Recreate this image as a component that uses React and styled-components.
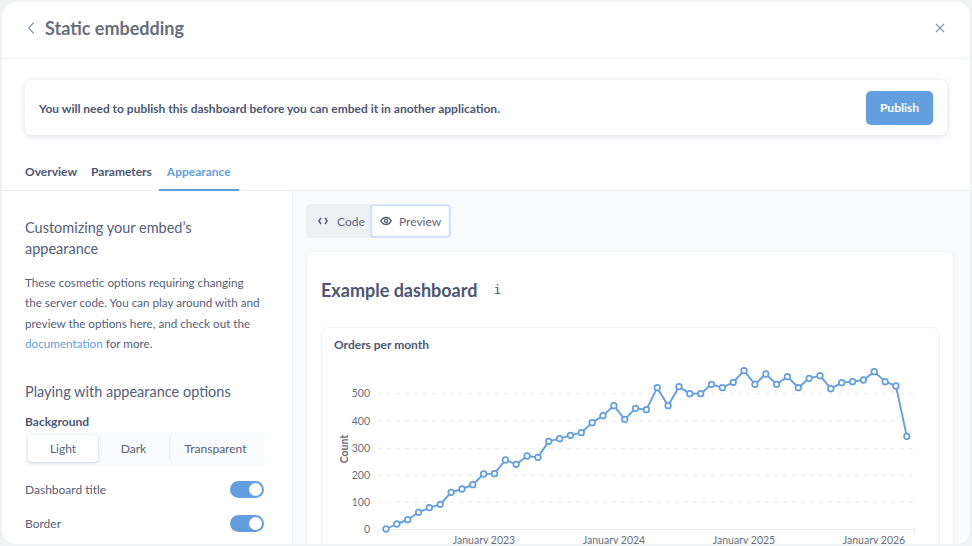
import React from "react";
import styled, { createGlobalStyle } from "styled-components";

const Global = createGlobalStyle`
  html, body { margin: 0; padding: 0; background: #f0f1f2; }
  body { font-family: Lato, "Open Sans", sans-serif; color: #4c5773; overflow: hidden; }
  * { box-sizing: border-box; }
`;

const Frame = styled.div`
  width: 972px;
  height: 546px;
  padding: 2px;
  overflow: hidden;
`;
const Modal = styled.div`
  width: 968px;
  height: 542px;
  background: #fff;
  border-radius: 14px;
  overflow: hidden;
  display: flex;
  flex-direction: column;
`;
const Header = styled.header`
  height: 57px;
  flex: none;
  display: flex;
  align-items: center;
  justify-content: space-between;
  padding: 0 25px 5px 24px;
  border-bottom: 1px solid #eff1f3;
`;
const TitleGroup = styled.div`
  display: flex;
  align-items: center;
  gap: 9px;
`;
const IconSlot = styled.span`
  display: inline-flex;
  align-items: center;
  color: ${(p) => p.$color || "#8c93a3"};
`;
const Title = styled.h1`
  margin: 0;
  font-size: 18px;
  font-weight: 700;
  color: #696e7b;
`;
const BannerWrap = styled.div`
  flex: none;
  padding: 21px 23px 0;
`;
const Banner = styled.div`
  height: 55px;
  background: #fff;
  border-radius: 6px;
  box-shadow: 0 1px 6px rgba(76, 87, 115, 0.2);
  display: flex;
  align-items: center;
  justify-content: space-between;
  padding: 0 14px;
`;
const BannerText = styled.span`
  padding-top: 1px;
  font-size: 12px;
  font-weight: 700;
  color: #4c5773;
`;
const PublishButton = styled.button`
  width: 67px;
  height: 34px;
  border: 0;
  border-radius: 5px;
  background: #639fdf;
  color: #fff;
  font: 700 12px Lato, sans-serif;
`;
const Tabs = styled.nav`
  flex: none;
  height: 56px;
  display: flex;
  align-items: flex-end;
  padding: 0 15px 0 23px;
  border-bottom: 1px solid #e9ecf0;
`;
const Tab = styled.div`
  height: 27px;
  margin-bottom: -1px;
  padding: ${(p) => (p.$active ? "0 8px" : "0")};
  margin-right: ${(p) => p.$mr || 0}px;
  font-size: 12px;
  font-weight: 700;
  color: ${(p) => (p.$active ? "#639fdf" : "#4c5773")};
  border-bottom: 2px solid ${(p) => (p.$active ? "#639fdf" : "transparent")};
`;
const Body = styled.div`
  flex: 1;
  min-height: 0;
  display: flex;
`;
const Sidebar = styled.aside`
  width: 291px;
  flex: none;
  padding: 27px 27px 0 23px;
  border-right: 1px solid #eef0f3;
`;
const SideHeading = styled.h2`
  margin: 0;
  font-size: 14.5px;
  font-weight: 400;
  line-height: 20.5px;
  color: #556079;
`;
const SideText = styled.p`
  margin: 13px 0 29px;
  max-width: 238px;
  font-size: 11.7px;
  line-height: 20.3px;
  color: #556079;
`;
const DocLink = styled.a`
  color: #639fdf;
`;
const FieldLabel = styled.div`
  margin-top: 11px;
  font-size: 12px;
  font-weight: 700;
  line-height: 16px;
`;
const Segmented = styled.div`
  margin-top: 2px;
  height: 34px;
  width: 239px;
  display: flex;
  align-items: center;
  padding: 3px;
  border-radius: 4px;
  background: #f9fbfc;
`;
const Segment = styled.div`
  height: 27px;
  width: ${(p) => p.$w}px;
  flex: none;
  display: flex;
  align-items: center;
  justify-content: center;
  font-size: 12px;
  color: #556079;
  border-radius: 4px;
  background: ${(p) => (p.$active ? "#fff" : "transparent")};
  box-shadow: ${(p) => (p.$active ? "0 1px 3px rgba(76,87,115,.25)" : "none")};
  border-left: ${(p) => (p.$divider ? "1px solid #eceff2" : "0")};
`;
const ToggleList = styled.div`
  margin-top: 7px;
  width: 239px;
`;
const ToggleRow = styled.div`
  height: 34px;
  display: flex;
  align-items: center;
  justify-content: space-between;
  font-size: 12px;
  color: #556079;
`;
const Switch = styled.span`
  width: 34px;
  height: 17px;
  padding: 2px;
  border-radius: 9px;
  background: #639fdf;
  display: flex;
  justify-content: flex-end;
  &::after {
    content: "";
    width: 13px;
    height: 13px;
    border-radius: 50%;
    background: #fff;
  }
`;
const Main = styled.main`
  flex: 1;
  min-width: 0;
  background: #f9fbfc;
  padding: 13px 17px 0 13px;
  overflow: hidden;
`;
const ViewSwitch = styled.div`
  width: 145px;
  height: 34px;
  display: flex;
  align-items: center;
  border-radius: 4px;
  background: #eef1f4;
`;
const ViewButton = styled.div`
  height: ${(p) => (p.$active ? "34px" : "30px")};
  display: flex;
  align-items: center;
  gap: ${(p) => (p.$active ? "7px" : "9px")};
  flex: none;
  width: ${(p) => (p.$active ? "81px" : "64px")};
  padding-left: ${(p) => (p.$active ? "8px" : "12px")};
  font-size: 12px;
  color: #5d6780;
  border-radius: 4px;
  background: ${(p) => (p.$active ? "#fff" : "transparent")};
  border: ${(p) => (p.$active ? "2px solid #d3e4f6" : "0")};
  box-shadow: ${(p) => (p.$active ? "inset 0 0 2px rgba(99,159,223,.25)" : "none")};
`;
const Card = styled.section`
  margin: 14px 0 0 1px;
  height: 400px;
  padding: 0 13px 0 14px;
  background: #fff;
  border-radius: 6px 6px 0 0;
  box-shadow: 0 0 3px rgba(76, 87, 115, 0.1);
`;
const DashHead = styled.div`
  height: 75px;
  display: flex;
  align-items: center;
  gap: 16px;
`;
const DashTitle = styled.h2`
  margin: 0;
  font-size: 18px;
  font-weight: 700;
  color: #4c5773;
`;
const InfoGlyph = styled.span`
  font: 400 13px "DejaVu Sans Mono", monospace;
  color: #4c5773;
`;
const ChartCard = styled.div`
  border: 1px solid #eef0f3;
  border-radius: 8px;
  height: 300px;
  padding: 9px 0 0 12px;
`;
const ChartTitle = styled.div`
  font-size: 12px;
  font-weight: 700;
  line-height: 16px;
  color: #4c5773;
`;
const ChartSvg = styled.svg`
  display: block;
  width: 606px;
  height: 200px;
`;

/* pixel coordinates of the series, relative to the chart svg origin */
const OX = 334;
const OY = 353;
const raw = [
  537,522,509,487,473,463,427,417,404,372,371,330,343,318,322,274,266,256,248,218,197,167,208,175,179,113,167,110,131,131,103,113,97,62,103,72,103,80,113,85,77,116,98,95,90,65,95,108,259,
];
const pts = raw.map((z, i) => [386 + i * 10.85 - OX, 350 + z / 3 - OY]);
const grid = [[500, 393.3], [400, 420.8], [300, 448.3], [200, 475.3], [100, 502.3]];
const ticks = [["January 2023", 484], ["January 2024", 614], ["January 2025", 744], ["January 2026", 874]];

function Chart() {
  return (
    <ChartSvg viewBox="0 0 606 200">
      <text x={11} y={449 - OY} fontSize="10.5" fontWeight="700" fill="#696e7b" fontFamily="Lato" textAnchor="middle" transform={`rotate(-90 11 ${449 - OY})`} dy="3">Count</text>
      {grid.map(([v, y]) => (
        <g key={v}>
          <line x1={378 - OX} x2={914 - OX} y1={y - OY} y2={y - OY} stroke="#e9ebee" strokeDasharray="4 5" />
          <text x={370 - OX} y={y - OY + 4} fontSize="10.5" fill="#696e7b" fontFamily="Lato" textAnchor="end">{v}</text>
        </g>
      ))}
      <text x={370 - OX} y={533 - OY} fontSize="10.5" fill="#696e7b" fontFamily="Lato" textAnchor="end">0</text>
      <path d={`M${378 - OX} ${535 - OY}V${529.5 - OY}H${914.5 - OX}V${535 - OY}`} fill="none" stroke="#e9ebee" />
      {ticks.map(([t, x]) => (
        <text key={t} x={x - OX} y={544 - OY} fontSize="10.5" fill="#696e7b" fontFamily="Lato" textAnchor="middle">{t}</text>
      ))}
      <polyline points={pts.map((p) => p.join(",")).join(" ")} fill="none" stroke="#639fdf" strokeWidth="1.9" strokeLinejoin="round" />
      {pts.map(([x, y], i) => (
        <circle key={i} cx={x} cy={y} r="2.8" fill="#fff" stroke="#639fdf" strokeWidth="1.7" />
      ))}
    </ChartSvg>
  );
}

export default function App() {
  return (
    <Frame>
      <Global />
      <Modal>
        <Header>
          <TitleGroup>
            <IconSlot>
              <svg width="10" height="14" viewBox="0 0 10 14" fill="none" stroke="currentColor" strokeWidth="1.2"><path d="M8 1.5 2.5 7 8 12.5" /></svg>
            </IconSlot>
            <Title>Static embedding</Title>
          </TitleGroup>
          <IconSlot>
            <svg width="10" height="10" viewBox="0 0 10 10" fill="none" stroke="currentColor" strokeWidth="1.2"><path d="M1 1l8 8M9 1l-8 8" /></svg>
          </IconSlot>
        </Header>
        <BannerWrap>
          <Banner>
            <BannerText>You will need to publish this dashboard before you can embed it in another application.</BannerText>
            <PublishButton>Publish</PublishButton>
          </Banner>
        </BannerWrap>
        <Tabs>
          <Tab $mr={14}>Overview</Tab>
          <Tab $mr={7}>Parameters</Tab>
          <Tab $active>Appearance</Tab>
        </Tabs>
        <Body>
          <Sidebar>
            <SideHeading>Customizing your embed’s appearance</SideHeading>
            <SideText>
              These cosmetic options requiring changing the server code. You can play around with and preview the options here, and check out the <DocLink>documentation</DocLink> for more.
            </SideText>
            <SideHeading>Playing with appearance options</SideHeading>
            <FieldLabel>Background</FieldLabel>
            <Segmented>
              <Segment $w={70} $active>Light</Segment>
              <Segment $w={71}>Dark</Segment>
              <Segment $w={92} $divider>Transparent</Segment>
            </Segmented>
            <ToggleList>
              <ToggleRow>Dashboard title<Switch /></ToggleRow>
              <ToggleRow>Border<Switch /></ToggleRow>
            </ToggleList>
          </Sidebar>
          <Main>
            <ViewSwitch>
              <ViewButton>
                <IconSlot $color="#4c5773">
                  <svg width="10" height="10" viewBox="0 0 10 10" fill="none" stroke="currentColor" strokeWidth="1.4"><path d="M3 2 .8 5 3 8M7 2l2.2 3L7 8" /></svg>
                </IconSlot>
                Code
              </ViewButton>
              <ViewButton $active>
                <IconSlot $color="#4c5773">
                  <svg width="12" height="10" viewBox="0 0 12 10" fill="none" stroke="currentColor" strokeWidth="1.3"><path d="M.8 5C2 2.8 3.8 1.5 6 1.5S10 2.8 11.2 5C10 7.2 8.2 8.5 6 8.5S2 7.2.8 5Z" /><circle cx="6" cy="5" r="1.6" /></svg>
                </IconSlot>
                Preview
              </ViewButton>
            </ViewSwitch>
            <Card>
              <DashHead>
                <DashTitle>Example dashboard</DashTitle>
                <InfoGlyph>i</InfoGlyph>
              </DashHead>
              <ChartCard>
                <ChartTitle>Orders per month</ChartTitle>
                <Chart />
              </ChartCard>
            </Card>
          </Main>
        </Body>
      </Modal>
    </Frame>
  );
}
